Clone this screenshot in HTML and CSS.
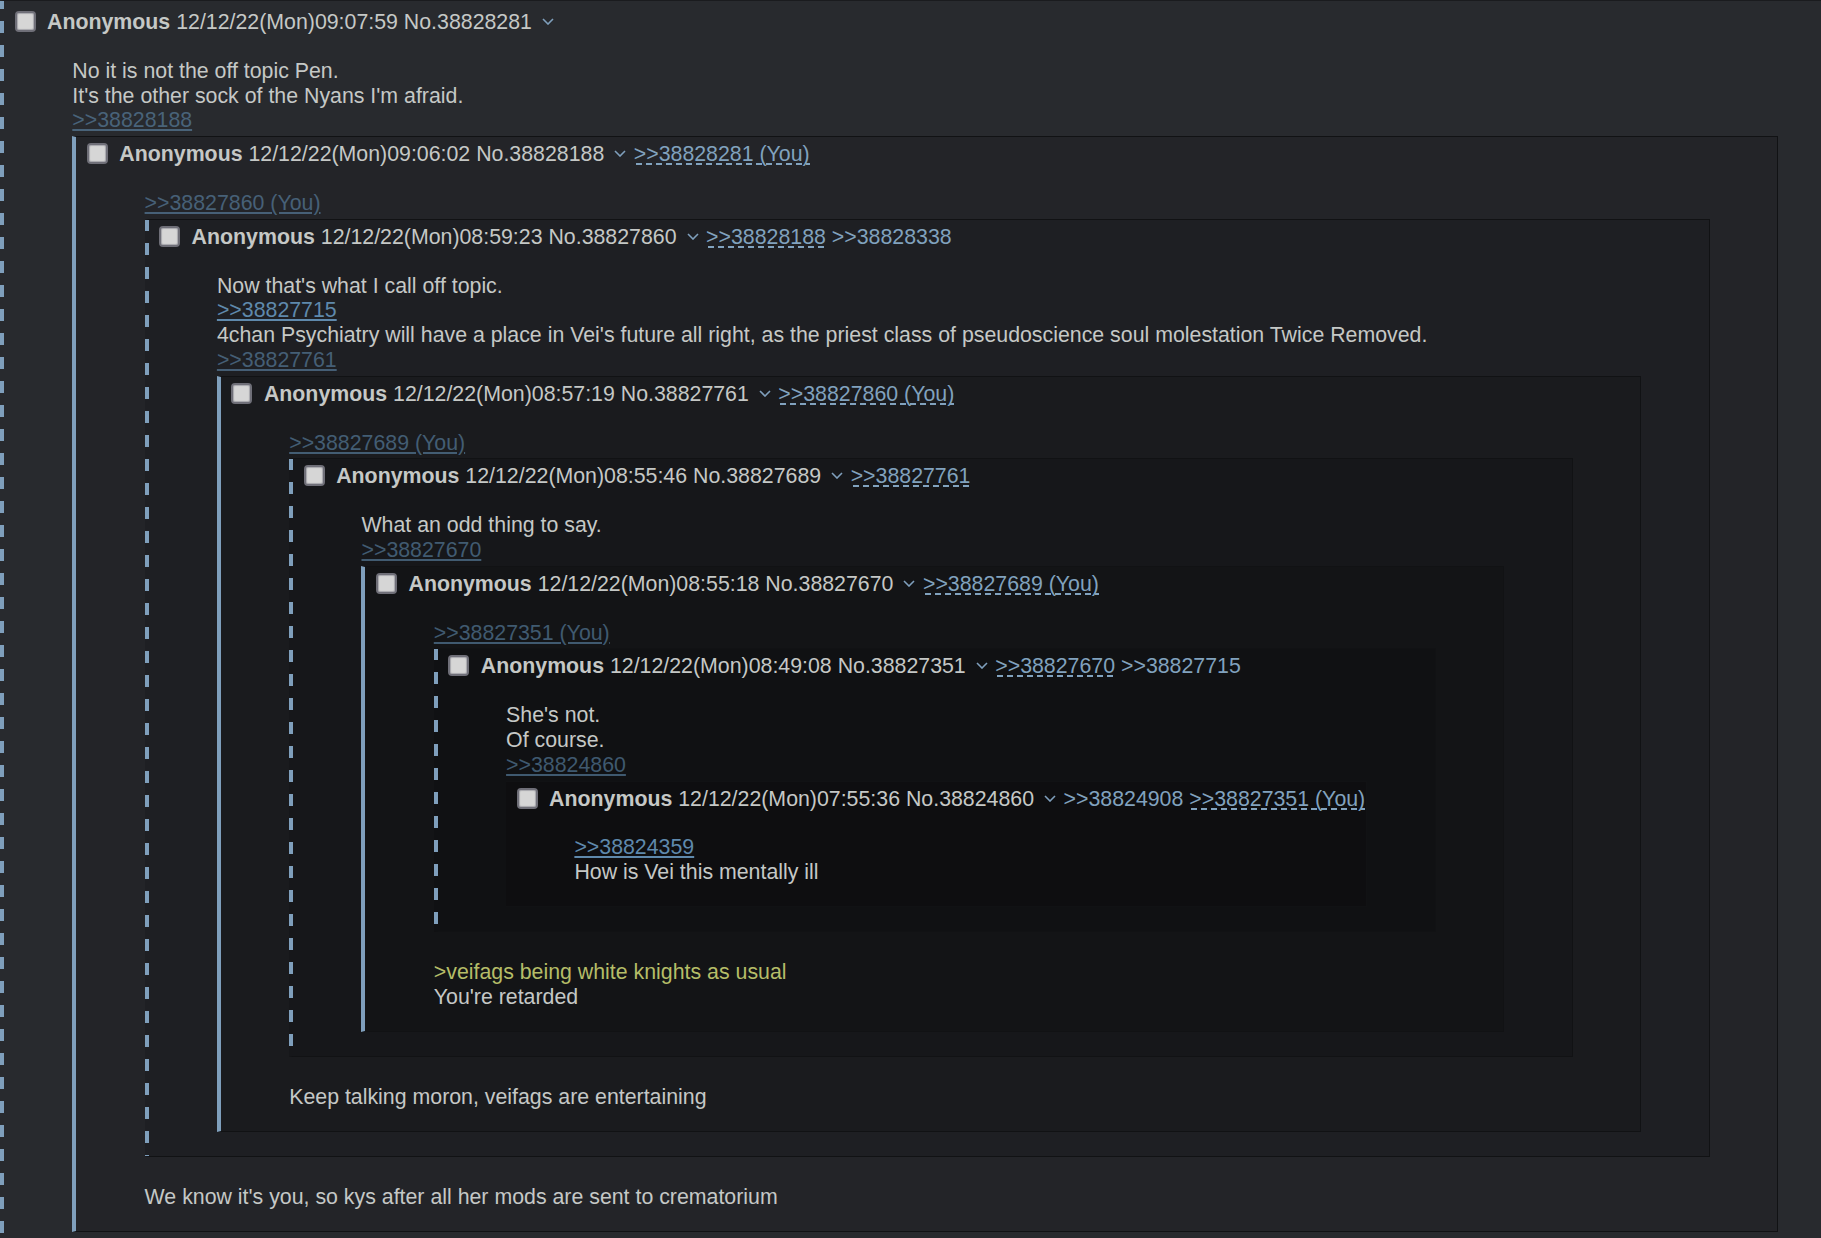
FILE: index.html
```html
<!doctype html>
<html>
<head>
<meta charset="utf-8">
<link rel="stylesheet" href="styles.css">
<title>Thread</title>
</head>

<body>

<div class="post top dash">
	<div class="head"><span class="cb"></span><b class="name">Anonymous</b> <span class="date">12/12/22(Mon)09:07:59</span> <span class="no">No.38828281</span><svg class="menu" viewBox="0 0 12 7"><polyline points="1,1 6,6 11,1"/></svg></div>
	<blockquote class="msg">No it is not the off topic Pen.<br>It's the other sock of the Nyans I'm afraid.<br><a class="ql inlined">&gt;&gt;38828188</a>

	<div class="post solid">
		<div class="head"><span class="cb"></span><b class="name">Anonymous</b> <span class="date">12/12/22(Mon)09:06:02</span> <span class="no">No.38828188</span><svg class="menu" viewBox="0 0 12 7"><polyline points="1,1 6,6 11,1"/></svg><a class="bl fwd">&gt;&gt;38828281 (You)</a></div>
		<blockquote class="msg"><a class="ql inlined">&gt;&gt;38827860 (You)</a>

		<div class="post dash">
			<div class="head"><span class="cb"></span><b class="name">Anonymous</b> <span class="date">12/12/22(Mon)08:59:23</span> <span class="no">No.38827860</span><svg class="menu" viewBox="0 0 12 7"><polyline points="1,1 6,6 11,1"/></svg><a class="bl fwd">&gt;&gt;38828188</a> <a class="bl">&gt;&gt;38828338</a></div>
			<blockquote class="msg">Now that's what I call off topic.<br><a class="ql">&gt;&gt;38827715</a><br>4chan Psychiatry will have a place in Vei's future all right, as the priest class of pseudoscience soul molestation Twice Removed.<br><a class="ql inlined">&gt;&gt;38827761</a>

			<div class="post solid">
				<div class="head"><span class="cb"></span><b class="name">Anonymous</b> <span class="date">12/12/22(Mon)08:57:19</span> <span class="no">No.38827761</span><svg class="menu" viewBox="0 0 12 7"><polyline points="1,1 6,6 11,1"/></svg><a class="bl fwd">&gt;&gt;38827860 (You)</a></div>
				<blockquote class="msg"><a class="ql inlined">&gt;&gt;38827689 (You)</a>

				<div class="post dash">
					<div class="head"><span class="cb"></span><b class="name">Anonymous</b> <span class="date">12/12/22(Mon)08:55:46</span> <span class="no">No.38827689</span><svg class="menu" viewBox="0 0 12 7"><polyline points="1,1 6,6 11,1"/></svg><a class="bl fwd">&gt;&gt;38827761</a></div>
					<blockquote class="msg">What an odd thing to say.<br><a class="ql inlined">&gt;&gt;38827670</a>

					<div class="post solid">
						<div class="head"><span class="cb"></span><b class="name">Anonymous</b> <span class="date">12/12/22(Mon)08:55:18</span> <span class="no">No.38827670</span><svg class="menu" viewBox="0 0 12 7"><polyline points="1,1 6,6 11,1"/></svg><a class="bl fwd">&gt;&gt;38827689 (You)</a></div>
						<blockquote class="msg"><a class="ql inlined">&gt;&gt;38827351 (You)</a>

						<div class="post dash">
							<div class="head"><span class="cb"></span><b class="name">Anonymous</b> <span class="date">12/12/22(Mon)08:49:08</span> <span class="no">No.38827351</span><svg class="menu" viewBox="0 0 12 7"><polyline points="1,1 6,6 11,1"/></svg><a class="bl fwd">&gt;&gt;38827670</a> <a class="bl">&gt;&gt;38827715</a></div>
							<blockquote class="msg">She's not.<br>Of course.<br><a class="ql inlined">&gt;&gt;38824860</a>

							<div class="post plain">
								<div class="head"><span class="cb"></span><b class="name">Anonymous</b> <span class="date">12/12/22(Mon)07:55:36</span> <span class="no">No.38824860</span><svg class="menu" viewBox="0 0 12 7"><polyline points="1,1 6,6 11,1"/></svg><a class="bl">&gt;&gt;38824908</a> <a class="bl fwd">&gt;&gt;38827351 (You)</a></div>
								<blockquote class="msg"><a class="ql">&gt;&gt;38824359</a><br>How is Vei this mentally ill</blockquote>
							</div>
							</blockquote>
						</div>
						<br><span class="quote">&gt;veifags being white knights as usual</span><br>You're retarded</blockquote>
					</div>
					</blockquote>
				</div>
				<br>Keep talking moron, veifags are entertaining</blockquote>
			</div>
			</blockquote>
		</div>
		<br>We know it's you, so kys after all her mods are sent to crematorium</blockquote>
	</div>
	</blockquote>
</div>

</body>
</html>
```
FILE: styles.css
```css
html,body
{
	margin:0;
	padding:0;
	overflow:hidden;
	background-color:#282a2e;
}
body
{
	font-family:"Liberation Sans",Arial,sans-serif;
	font-size:21.33px;
	line-height:24.8px;
	color:#c5c8c6;
}
.post
{
	margin:3px 0;
	border:1px solid #111214;
	border-left-width:4px;
	background-color:rgba(0,0,0,.12);
}
.post.top
{
	margin:0 -24.5px 0 0;
	padding-top:4px;
	border:0;
	border-top:1px solid #1a1b1e;
	border-left:4px solid transparent;
	background-color:#282a2e;
}
.post.solid
{
	border-left:4px solid #7f9fbc;
}
.post.dash
{
	border-left:4px solid transparent;
	background-image:linear-gradient(#7f9fbc 12px,transparent 12px);
	background-size:4px 24px;
	background-repeat:repeat-y;
	background-origin:border-box;
	background-clip:border-box;
	background-position:0 0;
}
.post.top.dash
{
	background-position:0 -3px;
}
.post.plain
{
	border-left:0;
}
.head
{
	padding:5px 0 0 10.5px;
	white-space:nowrap;
}
.cb
{
	display:inline-block;
	box-sizing:border-box;
	width:21px;
	height:21px;
	margin-right:11.5px;
	vertical-align:-3px;
	border:2.5px solid #6f6f78;
	border-radius:4px;
	background-color:#d6d6d6;
	box-shadow:inset 0 0 1px 1px #a8a8ad;
}
.name
{
	font-weight:bold;
}
.menu
{
	width:12px;
	height:7px;
	margin:0 7.5px 0 10px;
	vertical-align:4px;
}
.menu polyline
{
	fill:none;
	stroke:#7f9fbc;
	stroke-width:1.6;
}
.bl
{
	color:#81a2be;
	text-decoration:none;
}
.bl.fwd
{
	background-image:linear-gradient(to right,#81a2be 6px,transparent 6px);
	background-size:10px 1.5px;
	background-repeat:repeat-x;
	background-position:2px calc(100% - 1.5px);
}
.msg
{
	display:flow-root;
	margin:24px 67.5px 21.2px 68.3px;
}
.ql
{
	color:#5f89ac;
	text-decoration:underline;
}
.ql.inlined
{
	opacity:.6;
}
.quote
{
	color:#b5bd68;
}
```
